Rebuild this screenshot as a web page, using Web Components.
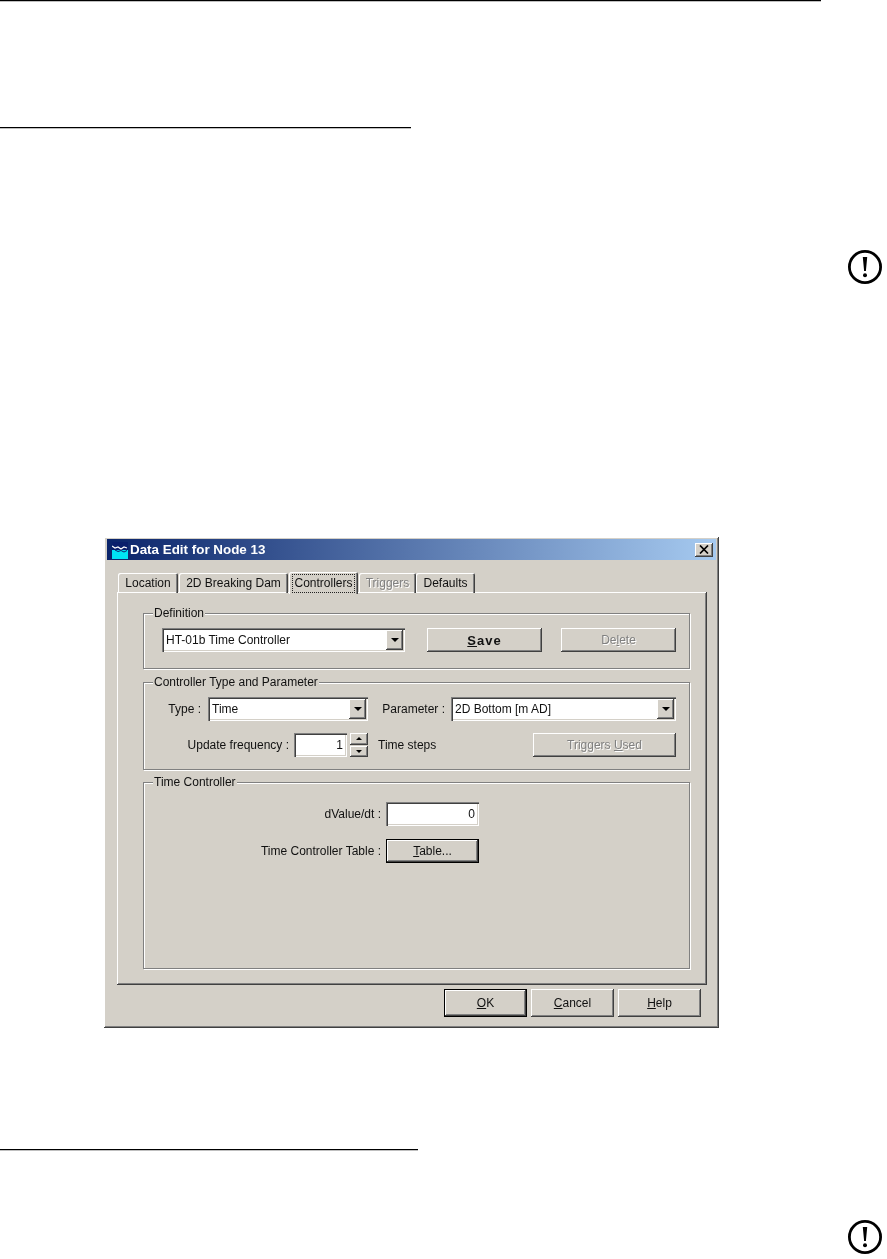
<!DOCTYPE html>
<html>
<head>
<meta charset="utf-8">
<title>Data Edit for Node 13</title>
<style>
  html, body { margin: 0; background: #fff; }
  body { font: 12px "Liberation Sans", Arial, sans-serif; color: #111; }
</style>
</head>
<body>
<manual-page>
  <page-rule width="821"></page-rule>
  <page-rule width="411" top="126"></page-rule>
  <note-icon top="121"></note-icon>

  <win-dialog heading="Data Edit for Node 13">
    <win-tab slot="tabs" width="60">Location</win-tab>
    <win-tab slot="tabs" width="109" left="1">2D Breaking Dam</win-tab>
    <win-tab slot="tabs" width="69" left="1" selected>Controllers</win-tab>
    <win-tab slot="tabs" width="57" left="1" disabled>Triggers</win-tab>
    <win-tab slot="tabs" width="59">Defaults</win-tab>

    <win-group heading="Definition" height="56">
      <win-row>
        <win-combo width="243">HT-01b Time Controller</win-combo>
        <win-button width="115" left="22" bold><u>S</u>ave</win-button>
        <win-button width="115" left="19" disabled>De<u>l</u>ete</win-button>
      </win-row>
    </win-group>

    <win-group heading="Controller Type and Parameter" height="88" top="1">
      <win-row>
        <win-label width="57">Type :</win-label>
        <win-combo width="160" left="7">Time</win-combo>
        <win-label width="77">Parameter :</win-label>
        <win-combo width="225" left="6">2D Bottom [m AD]</win-combo>
      </win-row>
      <win-row top="12">
        <win-label width="145">Update frequency :</win-label>
        <win-input width="53" left="5">1</win-input>
        <win-spin></win-spin>
        <win-label width="155" left="10" align="left">Time steps</win-label>
        <win-button width="143" disabled>Triggers <u>U</u>sed</win-button>
      </win-row>
    </win-group>

    <win-group heading="Time Controller" height="187" pad="19">
      <win-row>
        <win-label width="237">dValue/dt :</win-label>
        <win-input width="93" left="5">0</win-input>
      </win-row>
      <win-row top="13">
        <win-label width="237">Time Controller Table :</win-label>
        <win-button width="93" left="5" default><u>T</u>able...</win-button>
      </win-row>
    </win-group>

    <win-button slot="footer" width="83" default><u>O</u>K</win-button>
    <win-button slot="footer" width="83"><u>C</u>ancel</win-button>
    <win-button slot="footer" width="83"><u>H</u>elp</win-button>
  </win-dialog>

  <page-rule width="418" top="121"></page-rule>
  <note-icon top="69"></note-icon>
</manual-page>

<script>
const bevelUp = `inset -1px -1px 0 #404040, inset 1px 1px 0 #fff, inset -2px -2px 0 #808080, inset 2px 2px 0 #d4d0c8`;
const bevelDown = `inset 1px 1px 0 #808080, inset 2px 2px 0 #404040, inset -1px -1px 0 #fff, inset -2px -2px 0 #d4d0c8`;

// every control below takes width / left / top attributes the same way
class WinElement extends HTMLElement {
  constructor(markup) {
    super();
    this.attachShadow({ mode: "open" });
    this.shadowRoot.innerHTML = markup;
  }
  connectedCallback() {
    const width = this.getAttribute("width");
    const left = this.getAttribute("left");
    const top = this.getAttribute("top");
    if (width) this.style.width = width + "px";
    if (left) this.style.marginLeft = left + "px";
    if (top) this.style.marginTop = top + "px";
  }
}

class ManualPage extends WinElement {
  constructor() {
    super(`
<style>
  :host { display: flex; flex-direction: column; width: 887px; height: 1259px; overflow: hidden; }
</style>
<slot></slot>`);
  }
}

class PageRule extends WinElement {
  constructor() {
    super(`<style>:host { display: block; height: 1px; background: #000; flex: none; box-shadow: 0 1px 0 rgba(0,0,0,.25); }</style>`);
  }
}

class NoteIcon extends WinElement {
  constructor() {
    super(`
<style>
  :host { display: block; width: 36px; height: 36px; align-self: flex-end; margin-right: 4px; flex: none; }
  svg { display: block; }
</style>
<svg width="36" height="36" viewBox="0 0 36 36">
  <circle cx="18" cy="18" r="15.6" fill="none" stroke="#000" stroke-width="2.8"/>
  <path d="M15.8 8h4.4l-1.3 14h-1.8z" fill="#000"/>
  <circle cx="18" cy="26.2" r="2" fill="#000"/>
</svg>`);
  }
}

class WinDialog extends WinElement {
  constructor() {
    super(`
<style>
  :host {
    display: flex; flex-direction: column; flex: none;
    width: 615px; height: 491px; box-sizing: border-box;
    margin: 252px 0 0 104px; padding: 2px 3px 0;
    background: #d4d0c8; color: #111; filter: blur(.4px);
    box-shadow: ${bevelUp};
  }
  .title {
    display: flex; align-items: center; height: 21px; flex: none; padding-left: 5px;
    background: linear-gradient(90deg, #0a246a, #a6caf0);
    color: #fff; font: bold 13.4px "Liberation Sans", Arial, sans-serif;
  }
  .title svg { flex: none; }
  .title > svg { margin-right: 2px; }
  .title span { flex: 1; }
  .close {
    display: flex; align-items: center; justify-content: center;
    width: 18px; height: 14px; margin-right: 3px;
    background: #d4d0c8; box-shadow: ${bevelUp};
  }
  .tabs { display: flex; align-items: flex-end; height: 22px; flex: none; margin: 11px 0 0 10px; padding-left: 1px; position: relative; z-index: 1; }
  .panel {
    display: flex; flex-direction: column; gap: 12px; flex: none;
    width: 590px; height: 393px; box-sizing: border-box;
    margin: -1px 0 0 10px; padding: 21px 16px 0 26px;
    box-shadow: inset -1px -1px 0 #404040, inset 1px 1px 0 #fff, inset -2px -2px 0 #808080;
  }
  .footer { display: flex; gap: 4px; justify-content: flex-end; margin: 4px 15px 0 0; }
</style>
<div class="title" part="title">
  <svg width="16" height="21" viewBox="0 0 16 21">
    <rect y="3" width="16" height="8" fill="#0a1f6b"/>
    <rect y="11" width="16" height="9" fill="#00e4f4"/>
    <path d="M0 7l3 2 3-1 3 2 3-2 3 1" fill="none" stroke="#fff" stroke-width="1.2"/>
    <path d="M3 11l3 1.5 3-1 3 1.5 3-1.5" fill="none" stroke="#0a1f6b" stroke-width="1"/>
  </svg>
  <span id="heading"></span>
  <div class="close">
    <svg width="10" height="9" viewBox="0 0 10 9"><path d="M1 .5l8 8M9 .5l-8 8" stroke="#000" stroke-width="1.7" fill="none"/></svg>
  </div>
</div>
<div class="tabs"><slot name="tabs"></slot></div>
<div class="panel"><slot></slot></div>
<div class="footer"><slot name="footer"></slot></div>`);
  }
  connectedCallback() {
    this.shadowRoot.getElementById("heading").textContent = this.getAttribute("heading");
  }
}

class WinTab extends WinElement {
  constructor() {
    super(`
<style>
  :host {
    display: block; box-sizing: border-box; height: 20px; flex: none;
    line-height: 20px; white-space: nowrap; text-align: center;
    border-radius: 2px 2px 0 0;
    box-shadow: inset 1px 1px 0 #fff, inset -1px 0 0 #404040, inset -2px 0 0 #808080;
  }
  :host([selected]) { height: 22px; padding: 0 4px; background: #d4d0c8; margin-bottom: -1px; }
  :host([selected]) span { display: block; height: 17px; line-height: 17px; margin-top: 3px; outline: 1px dotted #222; }
  :host([disabled]) { color: #808080; text-shadow: 1px 1px 0 #fff; }
</style>
<span><slot></slot></span>`);
  }
}

class WinGroup extends WinElement {
  constructor() {
    super(`
<style>
  :host {
    display: block; box-sizing: border-box; width: 547px; flex: none; position: relative;
    padding: 14px 12px 0 0;
    border: 1px solid #808080;
    box-shadow: 1px 1px 0 #fff, inset 1px 1px 0 #fff;
  }
  .legend { position: absolute; left: 9px; top: -8px; padding: 0 1px; line-height: 14px; background: #d4d0c8; white-space: nowrap; }
</style>
<div class="legend" id="legend"></div>
<slot></slot>`);
  }
  connectedCallback() {
    super.connectedCallback();
    this.shadowRoot.getElementById("legend").textContent = this.getAttribute("heading");
    this.style.height = this.getAttribute("height") + "px";
    if (this.getAttribute("pad")) this.style.paddingTop = this.getAttribute("pad") + "px";
    if (this.getAttribute("heading") === "Definition") this.querySelector("win-row").style.marginLeft = "18px";
  }
}

class WinRow extends WinElement {
  constructor() {
    super(`<style>:host { display: flex; align-items: center; height: 24px; }</style><slot></slot>`);
  }
}

class WinLabel extends WinElement {
  constructor() {
    super(`<style>:host { display: block; flex: none; text-align: right; white-space: nowrap; } :host([align="left"]) { text-align: left; }</style><slot></slot>`);
  }
}

class WinButton extends WinElement {
  constructor() {
    super(`
<style>
  :host {
    display: flex; align-items: center; justify-content: center; flex: none;
    box-sizing: border-box; height: 24px; white-space: nowrap;
    background: #d4d0c8; box-shadow: ${bevelUp};
  }
  :host([bold]) { font-weight: bold; font-size: 13px; letter-spacing: 1px; }
  :host([disabled]) { color: #808080; text-shadow: 1px 1px 0 #fff; }
  :host([default]) { border: 1px solid #000; }
  :host([slot="footer"]) { height: 28px; }
</style>
<span><slot></slot></span>`);
  }
}

class WinCombo extends WinElement {
  constructor() {
    super(`
<style>
  :host {
    display: flex; align-items: center; flex: none; box-sizing: border-box;
    height: 24px; padding: 2px; background: #fff; box-shadow: ${bevelDown};
  }
  .value { flex: 1; padding-left: 2px; padding-bottom: 1px; white-space: nowrap; }
  .drop {
    display: flex; align-items: center; justify-content: center; flex: none;
    width: 17px; height: 20px; background: #d4d0c8; box-shadow: ${bevelUp};
  }
  .drop i { width: 0; height: 0; border: 4px solid transparent; border-top: 4px solid #000; border-bottom: 0; }
</style>
<div class="value"><slot></slot></div>
<div class="drop"><i></i></div>`);
  }
}

class WinInput extends WinElement {
  constructor() {
    super(`
<style>
  :host {
    display: block; flex: none; box-sizing: border-box; height: 24px;
    padding: 0 4px; line-height: 25px; text-align: right;
    background: #fff; box-shadow: ${bevelDown};
  }
</style>
<slot></slot>`);
  }
}

class WinSpin extends WinElement {
  constructor() {
    super(`
<style>
  :host { display: flex; flex-direction: column; gap: 1px; flex: none; width: 18px; height: 24px; margin-left: 3px; }
  div { flex: 1; display: flex; align-items: center; justify-content: center; background: #d4d0c8; box-shadow: ${bevelUp}; }
  i { width: 0; height: 0; border: 3px solid transparent; }
  .up { border-bottom: 3px solid #000; border-top: 0; }
  .down { border-top: 3px solid #000; border-bottom: 0; }
</style>
<div><i class="up"></i></div>
<div><i class="down"></i></div>`);
  }
}

customElements.define("manual-page", ManualPage);
customElements.define("page-rule", PageRule);
customElements.define("note-icon", NoteIcon);
customElements.define("win-dialog", WinDialog);
customElements.define("win-tab", WinTab);
customElements.define("win-group", WinGroup);
customElements.define("win-row", WinRow);
customElements.define("win-label", WinLabel);
customElements.define("win-button", WinButton);
customElements.define("win-combo", WinCombo);
customElements.define("win-input", WinInput);
customElements.define("win-spin", WinSpin);
</script>
</body>
</html>
